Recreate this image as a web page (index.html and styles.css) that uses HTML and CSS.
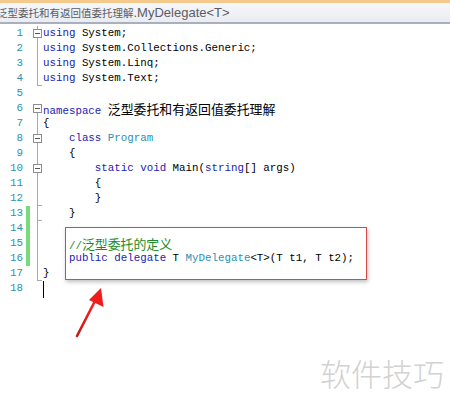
FILE: index.html
```
<!DOCTYPE html>
<html>
<head>
<meta charset="utf-8">
<link rel="stylesheet" href="styles.css">
</head>
<body>
<div class="topstrip"></div>
<div class="tabbar"><span class="title"><span class="zh">泛型委托和有返回值委托理解</span><span class="en">.MyDelegate&lt;T&gt;</span></span></div>
<div class="editor">
  <div class="row"><span class="ln">1</span><span class="chg"></span><span class="fold vline"><span class="box"></span></span><span class="code"><span class="kw">using</span> System;</span></div>
  <div class="row"><span class="ln">2</span><span class="chg"></span><span class="fold vline"></span><span class="code"><span class="kw">using</span> System.Collections.Generic;</span></div>
  <div class="row"><span class="ln">3</span><span class="chg"></span><span class="fold vline"></span><span class="code"><span class="kw">using</span> System.Linq;</span></div>
  <div class="row"><span class="ln">4</span><span class="chg"></span><span class="fold endline"></span><span class="code"><span class="kw">using</span> System.Text;</span></div>
  <div class="row"><span class="ln">5</span><span class="chg"></span><span class="fold"></span><span class="code"></span></div>
  <div class="row"><span class="ln">6</span><span class="chg"></span><span class="fold vlow"><span class="box"></span></span><span class="code"><span class="kw">namespace</span> <span class="zh">泛型委托和有返回值委托理解</span></span></div>
  <div class="row"><span class="ln">7</span><span class="chg"></span><span class="fold vline"></span><span class="code">{</span></div>
  <div class="row"><span class="ln">8</span><span class="chg"></span><span class="fold vline"><span class="box"></span></span><span class="code">    <span class="kw">class</span> <span class="ty">Program</span></span></div>
  <div class="row"><span class="ln">9</span><span class="chg"></span><span class="fold vline"></span><span class="code">    {</span></div>
  <div class="row"><span class="ln">10</span><span class="chg"></span><span class="fold vline"><span class="box"></span></span><span class="code">        <span class="kw">static</span> <span class="kw">void</span> Main(<span class="kw">string</span>[] args)</span></div>
  <div class="row"><span class="ln">11</span><span class="chg"></span><span class="fold vline"></span><span class="code">        {</span></div>
  <div class="row"><span class="ln">12</span><span class="chg"></span><span class="fold tick"></span><span class="code">        }</span></div>
  <div class="row"><span class="ln">13</span><span class="chg green"></span><span class="fold tick"></span><span class="code">    }</span></div>
  <div class="row"><span class="ln">14</span><span class="chg green"></span><span class="fold vline"></span><span class="code"></span></div>
  <div class="row"><span class="ln">15</span><span class="chg green"></span><span class="fold vline"></span><span class="code">    <span class="cm">//<span class="zh">泛型委托的定义</span></span></span></div>
  <div class="row"><span class="ln">16</span><span class="chg green"></span><span class="fold vline"></span><span class="code">    <span class="kw">public</span> <span class="kw">delegate</span> T <span class="ty">MyDelegate</span>&lt;T&gt;(T t1, T t2);</span></div>
  <div class="row"><span class="ln">17</span><span class="chg"></span><span class="fold endline"></span><span class="code">}</span></div>
  <div class="row"><span class="ln">18</span><span class="chg"></span><span class="fold"></span><span class="code"><span class="caret"></span></span></div>
</div>
<div class="redbox"></div>
<svg class="arrow" width="60" height="70" viewBox="0 0 60 70">
  <defs>
    <linearGradient id="ag" x1="0" y1="1" x2="1" y2="0">
      <stop offset="0" stop-color="#c81818"/>
      <stop offset="1" stop-color="#ff2020"/>
    </linearGradient>
  </defs>
  <line x1="17" y1="56" x2="36" y2="19" stroke="url(#ag)" stroke-width="2.6" stroke-linecap="round"/>
  <polygon points="41,8 43.5,27 29,20" fill="#f01c1c"/>
</svg>
<div class="watermark">软件技巧</div>
</body>
</html>
```
FILE: styles.css
```
html, body {
  margin: 0;
  padding: 0;
}
body {
  width: 450px;
  height: 405px;
  overflow: hidden;
  position: relative;
  background: #ffffff;
  font-family: "Liberation Mono", "Noto Sans CJK SC", monospace;
}
.topstrip {
  height: 3px;
  background: #f5c98c;
}
.tabbar {
  height: 19px;
  background: linear-gradient(#f6f7fa, #eaecf1);
  border-bottom: 2px solid #a6b0c0;
  display: flex;
  align-items: center;
  white-space: nowrap;
  overflow: hidden;
  color: #5a5d66;
}
.title {
  margin-left: -3px;
}
.title .zh {
  font-family: "Noto Sans CJK SC", sans-serif;
  font-size: 10.5px;
}
.title .en {
  font-family: "Liberation Sans", "Noto Sans", sans-serif;
  font-size: 13px;
}
.editor {
  padding-top: 2px;
}
.row {
  display: flex;
  height: 15px;
  line-height: 15px;
  font-size: 10.8px;
  color: #000;
}
.ln {
  width: 23px;
  padding-right: 3px;
  box-sizing: content-box;
  text-align: right;
  color: #2b91af;
}
.chg {
  width: 4px;
}
.chg.green {
  background: #78dc78;
}
.fold {
  width: 11px;
  margin-left: 1px;
  margin-right: 1px;
  display: flex;
  align-items: center;
  justify-content: flex-start;
  padding-left: 2px;
  box-sizing: border-box;
  background-repeat: no-repeat;
}
.vline {
  background-image: linear-gradient(#a8a8a8, #a8a8a8);
  background-size: 1px 100%;
  background-position: 6px 0;
}
.vlow {
  background-image: linear-gradient(#a8a8a8, #a8a8a8);
  background-size: 1px 50%;
  background-position: 6px 100%;
}
.endline {
  background-image: linear-gradient(#a8a8a8, #a8a8a8), linear-gradient(#a8a8a8, #a8a8a8);
  background-size: 1px 14px, 5px 1px;
  background-position: 6px 0, 6px 14px;
}
.tick {
  background-image: linear-gradient(#a8a8a8, #a8a8a8), linear-gradient(#a8a8a8, #a8a8a8);
  background-size: 1px 100%, 5px 1px;
  background-position: 6px 0, 6px 14px;
}
.box {
  width: 9px;
  height: 9px;
  box-sizing: border-box;
  border: 1px solid #8c8c8c;
  background: #fff linear-gradient(#555, #555) no-repeat center / 5px 1px;
}
.code {
  white-space: pre;
}
.zh {
  font-family: "Noto Sans CJK SC", sans-serif;
  font-size: 12.9px;
  line-height: 15px;
}
.kw {
  color: #2222b0;
}
.ty {
  color: #2b91af;
}
.cm {
  color: #1e8c1e;
}
.caret {
  display: inline-block;
  width: 1px;
  height: 17px;
  background: #000;
  vertical-align: -3px;
}
.redbox {
  position: absolute;
  left: 65px;
  top: 227px;
  width: 302px;
  height: 53px;
  box-sizing: border-box;
  border: 1.5px solid #d24a4a;
  box-shadow: 1px 2px 4px rgba(0, 0, 0, 0.25);
}
.arrow {
  position: absolute;
  left: 60px;
  top: 280px;
}
.watermark {
  position: absolute;
  left: 320px;
  top: 350px;
  font-family: "Noto Sans CJK SC", sans-serif;
  font-size: 31px;
  font-weight: 300;
  color: #d2d2d2;
  letter-spacing: 0px;
}
```
